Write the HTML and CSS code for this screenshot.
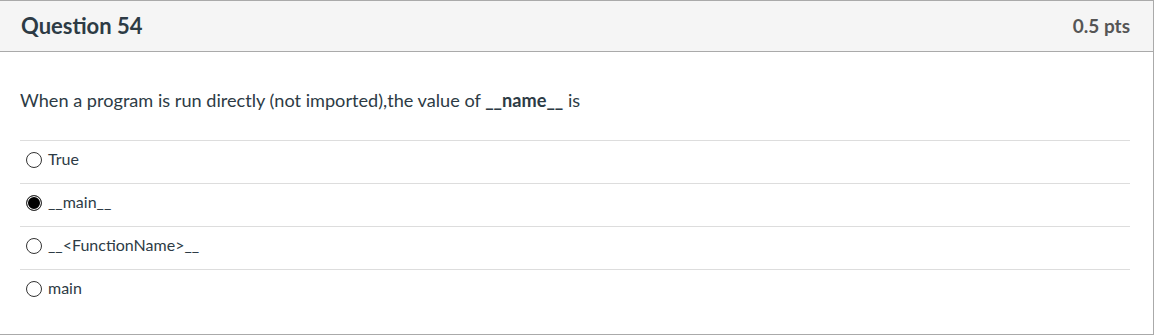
FILE: index.html
```html
<!DOCTYPE html>
<html>
<head>
<meta charset="utf-8">
<link rel="stylesheet" href="styles.css">
</head>
<body>
<div class="question">
  <div class="q-header">
    <h2 class="q-title">Question 54</h2>
    <span class="q-points">0.5 pts</span>
  </div>
  <div class="q-body">
    <p class="q-text">When a program is run directly (not imported),the value of <strong>__name__</strong> is</p>
    <div class="answers">
      <div class="answer"><span class="radio"></span><span class="label">True</span></div>
      <div class="answer"><span class="radio checked"></span><span class="label">__main__</span></div>
      <div class="answer"><span class="radio"></span><span class="label">__&lt;FunctionName&gt;__</span></div>
      <div class="answer"><span class="radio"></span><span class="label">main</span></div>
    </div>
  </div>
</div>
</body>
</html>
```
FILE: styles.css
```css
html, body {
  margin: 0;
  padding: 0;
  background: #fff;
}
body {
  font-family: Lato, "Helvetica Neue", Arial, sans-serif;
  color: #2d3b45;
}
.question {
  width: 1153px;
  height: 333px;
  border: 1px solid #aaaaaa;
  border-left: none;
  box-sizing: content-box;
}
.q-header {
  height: 51px;
  box-sizing: border-box;
  background: #f5f5f5;
  border-bottom: 1px solid #aaaaaa;
  display: flex;
  align-items: center;
  justify-content: space-between;
  padding: 0 23px 2px 21px;
}
.q-title {
  margin: 0;
  font-size: 22px;
  font-weight: 700;
  color: #2d3b45;
}
.q-points {
  font-size: 19px;
  font-weight: 700;
  color: #555;
}
.q-body {
  padding: 0 23px 0 20px;
}
.q-text {
  margin: 0;
  padding-top: 36px;
  height: 88px;
  box-sizing: border-box;
  font-size: 18.15px;
  line-height: 24px;
}
.q-text strong {
  font-weight: 700;
}
.answers {
  display: flex;
  flex-direction: column;
}
.answer {
  height: 43px;
  border-top: 1px solid #dddddd;
  display: flex;
  align-items: flex-start;
  padding-top: 8px;
  box-sizing: border-box;
}
.radio {
  width: 16px;
  height: 16px;
  box-sizing: border-box;
  border: 1px solid #333;
  border-radius: 50%;
  margin: 3px 6px 0 6px;
  background: #fff;
  flex: none;
}
.radio.checked {
  background: #000;
  box-shadow: inset 0 0 0 1px #fff;
}
.label {
  font-size: 16px;
  line-height: 20px;
  color: #2d3b45;
}
```
